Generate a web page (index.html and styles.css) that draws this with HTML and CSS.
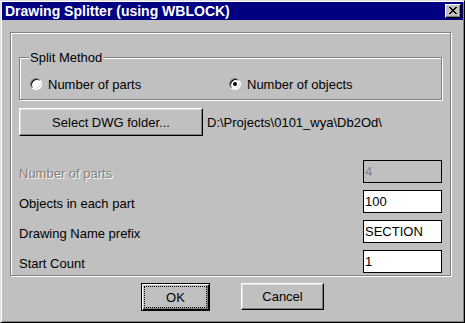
FILE: index.html
```html
<!DOCTYPE html>
<html>
    <head>
        <meta charset="utf-8" />
        <title>Drawing Splitter (using WBLOCK)</title>
        <link rel="stylesheet" href="styles.css">
    </head>
    <body>
        <div class="window">
            <div class="titlebar">
                <span class="title">Drawing Splitter (using WBLOCK)</span>
                <span class="close-btn">
                    <svg width="8" height="7" viewBox="0 0 8 7" shape-rendering="crispEdges">
                        <path d="M0 0h2v1H0zM6 0h2v1H6zM1 1h2v1H1zM5 1h2v1H5zM2 2h4v1H2zM3 3h2v1H3zM2 4h4v1H2zM1 5h2v1H1zM5 5h2v1H5zM0 6h2v1H0zM6 6h2v1H6z" fill="#000"/>
                    </svg>
                </span>
            </div>

            <div class="client">
                <div class="frame">
                    <fieldset class="groupbox">
                        <legend>Split Method</legend>
                        <div class="radio-row">
                            <label class="radio-option first"><span class="radio"></span>Number of parts</label>
                            <label class="radio-option"><span class="radio checked"></span>Number of objects</label>
                        </div>
                    </fieldset>

                    <div class="folder-row">
                        <div class="button folder-btn">Select DWG folder...</div>
                        <span class="path">D:\Projects\0101_wya\Db2Od\</span>
                    </div>

                    <div class="field-list">
                        <div class="field-row disabled">
                            <span class="field-label">Number of parts</span>
                            <div class="textbox">4</div>
                        </div>
                        <div class="field-row">
                            <span class="field-label">Objects in each part</span>
                            <div class="textbox">100</div>
                        </div>
                        <div class="field-row">
                            <span class="field-label">Drawing Name prefix</span>
                            <div class="textbox">SECTION</div>
                        </div>
                        <div class="field-row">
                            <span class="field-label">Start Count</span>
                            <div class="textbox">1</div>
                        </div>
                    </div>
                </div>

                <div class="button-row">
                    <div class="button default ok-btn"><span class="focus-rect">OK</span></div>
                    <div class="button cancel-btn">Cancel</div>
                </div>
            </div>
        </div>
    </body>
</html>
```

FILE: styles.css
```css
body {
	margin: 0;
	background: #c0c0c0;
	font-family: "Liberation Sans", Arial, sans-serif;
	font-size: 13px;
	color: #000;
}

.window {
	box-sizing: border-box;
	width: 465px;
	height: 323px;
	padding: 1px;
	background: #c0c0c0;
	border: 1px solid;
	border-color: #dfdfdf #000 #000 #dfdfdf;
	box-shadow: inset 1px 1px #fff, inset -1px -1px #808080;
}

.titlebar {
	display: flex;
	align-items: center;
	justify-content: space-between;
	height: 18px;
	padding: 0 2px 0 3px;
	background: #000080;
}

.title {
	color: #fff;
	font-weight: bold;
	font-size: 14px;
	line-height: 18px;
}

.close-btn {
	box-sizing: border-box;
	display: flex;
	align-items: center;
	justify-content: center;
	width: 16px;
	height: 14px;
	padding: 0 1px 1px 0;
	background: #c0c0c0;
	border: 1px solid;
	border-color: #fff #000 #000 #fff;
	box-shadow: inset -1px -1px #808080;
}

.client {
	padding: 12px 8px 0 8px;
}

.frame {
	box-sizing: border-box;
	width: 441px;
	height: 244px;
	padding: 17px 8px 0 8px;
	border: 1px solid #808080;
	box-shadow: inset 1px 1px #fff, 1px 1px #fff;
}

/* split method group */
.groupbox {
	margin: 0;
	padding: 11px 0 7px 0;
	min-width: 0;
	border: 1px solid #808080;
	box-shadow: inset 1px 1px #fff, 1px 1px #fff;
}

.groupbox legend {
	margin-left: 9px;
	padding: 0 2px 0 1px;
	line-height: 15px;
	background: #c0c0c0;
}

.radio-row {
	display: flex;
	align-items: center;
	height: 16px;
}

.radio-option {
	display: flex;
	align-items: center;
	gap: 6px;
}

.radio-option.first {
	width: 199px;
	padding-left: 10px;
}

.radio {
	box-sizing: border-box;
	position: relative;
	width: 12px;
	height: 12px;
	border-radius: 50%;
	background: #fff;
	border: 1px solid;
	border-color: #808080 #fff #fff #808080;
	box-shadow: inset 1px 1px #000, inset -1px -1px #dfdfdf;
}

.radio.checked::after {
	content: "";
	position: absolute;
	left: 3px;
	top: 3px;
	width: 4px;
	height: 4px;
	border-radius: 50%;
	background: #000;
}

/* buttons */
.button {
	box-sizing: border-box;
	display: flex;
	align-items: center;
	justify-content: center;
	background: #c0c0c0;
	border: 1px solid;
	border-color: #fff #000 #000 #fff;
	box-shadow: inset -1px -1px #808080, inset 1px 1px #dfdfdf;
}

.folder-row {
	display: flex;
	align-items: center;
	gap: 4px;
	margin-top: 8px;
}

.folder-btn {
	width: 184px;
	height: 28px;
}

.field-list {
	display: flex;
	flex-direction: column;
	gap: 7px;
	margin-top: 24px;
}

.field-row {
	display: flex;
	align-items: center;
	justify-content: space-between;
	height: 23px;
}

.field-label {
	padding-top: 3px;
}

.textbox {
	box-sizing: border-box;
	width: 79px;
	height: 23px;
	padding-left: 1px;
	line-height: 21px;
	background: #fff;
	border: 1px solid #000;
}

.field-row.disabled .field-label {
	color: #808080;
	text-shadow: 1px 1px #fff;
}

.field-row.disabled .textbox {
	background: #c0c0c0;
	color: #808080;
}

.button-row {
	display: flex;
	justify-content: center;
	gap: 31px;
	margin-top: 7px;
}

.ok-btn {
	width: 69px;
	height: 28px;
	border-color: #000;
	box-shadow: inset 1px 1px #fff, inset -1px -1px #000, inset -2px -2px #808080;
	padding: 2px;
}

.focus-rect {
	box-sizing: border-box;
	display: flex;
	align-items: center;
	justify-content: center;
	width: 100%;
	height: 100%;
	border: 1px dotted #000;
}

.cancel-btn {
	width: 83px;
	height: 27px;
}
```
